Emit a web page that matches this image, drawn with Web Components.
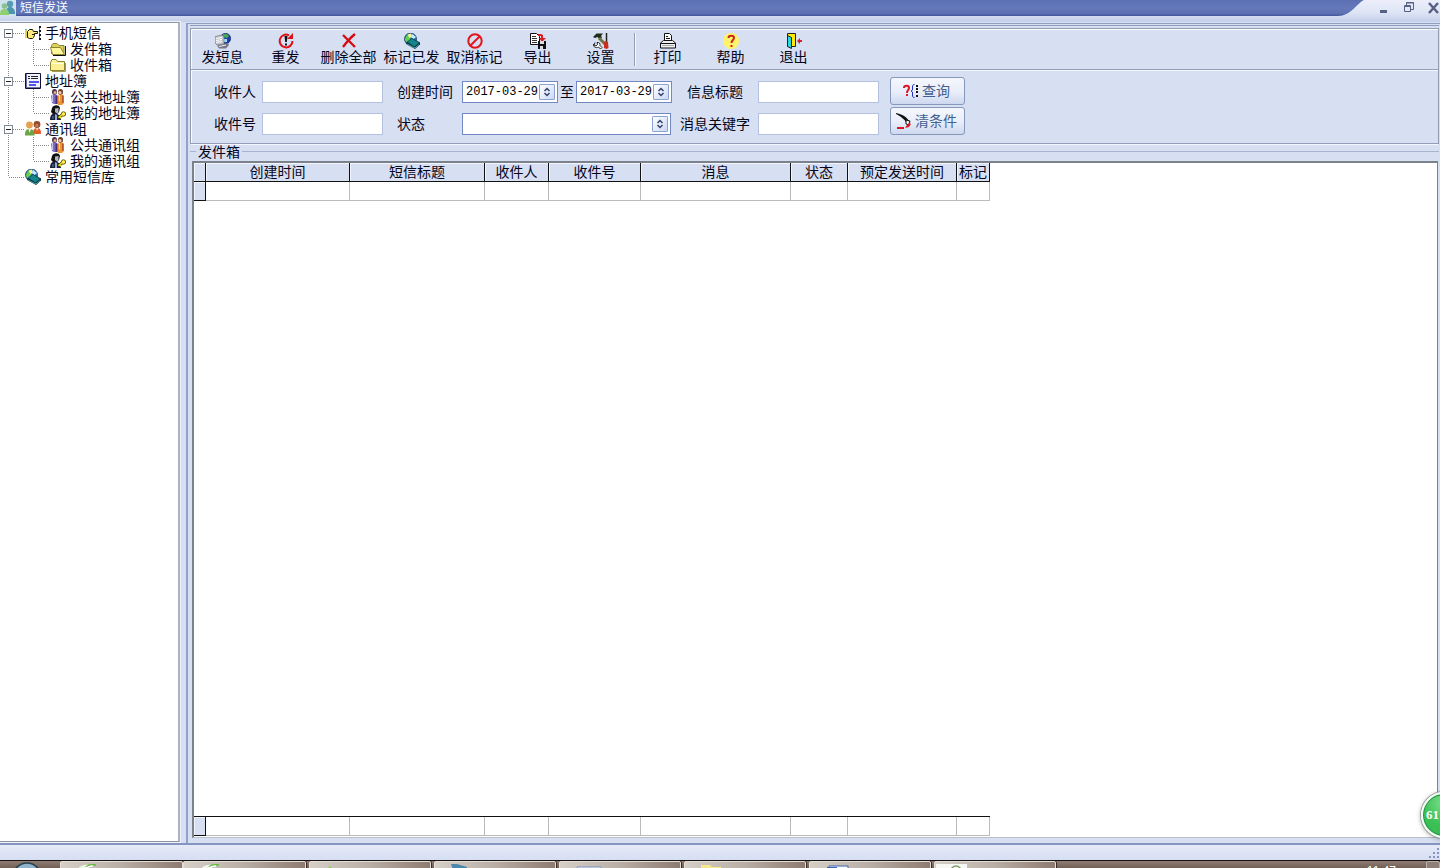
<!DOCTYPE html>
<html lang="zh-CN">
<head>
<meta charset="utf-8">
<title>短信发送</title>
<style>
html, body { height: 100%; margin: 0; }
body { overflow: hidden; font: 14px/16px "Liberation Sans", "Noto Sans CJK SC", sans-serif; color: #05051a; background: #d7dff3; }
</style>
</head>
<body>
<sms-app></sms-app>
<script>
const ICONS = {
  people: '<path d="M0 0h16v16H0z" fill="#cfe3ee"/><circle cx="10" cy="4" r="3.2" fill="#5b9ab5"/><path d="M6 14c0-5 1-7 4-7s5 2 5 7z" fill="#4d93b2"/><circle cx="4.500" cy="6" r="2.800" fill="#8cc08c"/><path d="M0 15c0-4 1-6 4.500-6S9 11 9 15z" fill="#8fcf6f"/>',
  hand: '<path d="M0 5h2v8H0z" fill="#e8d24a"/><path d="M0 4.500h2" stroke="#3fc6c6"/><path d="M2.500 12.500v-6l2-2h3l1 2h4v2H9.500v2l-1 2-1 1h-3z" fill="#ffe97a" stroke="#1a1405"/><path d="M7 9.500h2" stroke="#1a1405"/><path d="M14 1h2v2h-2zM14 5h2v2h-2zM14 9h2v2h-2zM14 13h2v2h-2z" fill="#15151f"/><path d="M14 3h1v2h-1zM14 7h1v2h-1zM14 11h1v2h-1z" fill="#e03030"/>',
  folderOpen: '<path d="M1.500 12.500V4.500l1.500-2h4l2 2h5v8z" fill="#dccf5c" stroke="#8b8430"/><path d="M2.500 13.500 .5 6.500h10l4 7z" fill="#fff79c" stroke="#8b8430"/><path d="M15.500 5v9.500H3" stroke="#111" fill="none"/>',
  folder: '<path d="M.5 13.500V5.500l1.500-3h4l1.500 2h7v9z" fill="#fbf093" stroke="#8b8430"/><path d="M1.500 6.500h12" stroke="#fffde0"/><path d="M15.500 6v8.500H2" stroke="#a39b55" fill="none"/>',
  book: '<path d="M.5 .5h15v15H.5z" fill="#f2f2fb" stroke="#10103c"/><path d="M1.500 1v14M1 14.500h14" stroke="#6c6ca0"/><path d="M3 3.500h2M6 3.500h7M3 5.500h2M6 5.500h7" stroke="#222"/><path d="M4 9h10M4 12h7" stroke="#2222e8" stroke-width="1.500"/>',
  pair: '<ellipse cx="4.500" cy="3" rx="2.500" ry="3" fill="#4a3350"/><circle cx="5" cy="3.500" r="1.500" fill="#e3ac8a"/><path d="M1 7c1-2 6-2 6.500 0v8H5.500L4 15l-2-1z" fill="#7a6cc4"/><path d="M5.500 6.500h2V15h-2z" fill="#40307a"/><path d="M2.500 6v7" stroke="#c9c3ee"/><ellipse cx="10.500" cy="3" rx="2.500" ry="3" fill="#6b3a2a"/><circle cx="10" cy="3.500" r="1.600" fill="#f4cba4"/><path d="M8 7c1-2 5-2 6 0v7l-2 2H8z" fill="#ee9432"/><path d="M12 6.500h1.500V14H12z" fill="#b0542a"/><path d="M9.500 6v6" stroke="#ffd79a"/>',
  userKey: '<path d="M2 3C3 0 9-1 10 3l-1 4-2 2H3L1 7z" fill="#101010"/><path d="M5 3.500 8.500 3v4L7 8.500 5 7z" fill="#b4b8bc"/><path d="M0 15c0-5 2-6.500 5-6.500S11 11 11 15z" fill="#1b2038"/><path d="m5 9 2 1v5H5z" fill="#8fb0dd"/><path d="M3 11v3" stroke="#5d7cc0"/><path d="m8 13 4-3" stroke="#4a4400" stroke-width="3"/><circle cx="13.500" cy="9" r="2.200" fill="#fff14e" stroke="#6b6000"/><path d="m8.500 12.700 4-3M10 12l1.500 1.500" stroke="#e9db20" stroke-width="1.500"/>',
  group: '<circle cx="4.500" cy="4" r="3.400" fill="#e5a050"/><circle cx="12" cy="3.500" r="3.400" fill="#96482a"/><circle cx="11.800" cy="4.500" r="1.800" fill="#c47a50"/><path d="M8 13c0-4 1-6 4-6s4 2 4 6z" fill="#e0602c"/><path d="M0 14.500C0 10 1 8 4.500 8S9.500 10 9.500 14.500z" fill="#6aa548"/><path d="m3.500 8 1 4 1.500-4z" fill="#eef7e5"/><path d="m11 7 1 3 1.500-3z" fill="#fbdcc8"/>',
  globe: '<circle cx="6.500" cy="6" r="6" fill="#2e72b8" stroke="#173d66" stroke-width=".8"/><path d="M.8 6 3 2l4 1-1.500 4L2 9z" fill="#63cf4a"/><path d="M3.500 1.500 7 .6 8 3.500 5.500 5z" fill="#f4f78a"/><path d="M8 .8 12 4 9 6.500 7 4z" fill="#bfeaff"/><path d="m3 9 5-4 8 4.500v2L11 16l-9-5z" fill="#062f3a"/><path d="m3.500 9 4.500-3.200 7 4L10.500 13.500z" fill="#15858c"/><path d="m3 11 8 4 4-3.500" stroke="#5dc0c4" fill="none" stroke-width=".8"/>',
  send: '<circle cx="10.500" cy="5.500" r="5.200" fill="#1d3fb0" stroke="#101c50" stroke-width=".6"/><path d="M8 1h4l2 2-2 2-4-1z" fill="#46a850"/><path d="M9 6h3v3H9z" fill="#9fdcff"/><path d="m0 3.500 7-1.500 2 2v7l-7 1-2-2z" fill="#c2c2c8" stroke="#777" stroke-width=".7"/><path d="M1 5.500 7 4.500M1 7.500l6-1M1 9.500l6-1" stroke="#fff"/><path d="m2 12.500 11-2.500 1 2-3 3.500H4z" fill="#77778a"/><path d="m4 13.500 7-1.500" stroke="#eee"/>',
  resend: '<path d="M11 2.300A6.400 6.400 0 1 0 14.500 8" fill="none" stroke="#df1118" stroke-width="2"/><path d="M15 0v6H9z" fill="#df1118"/><path d="M6.500 3h3L8.800 9H7.200zM7 10.500h2v2H7z" fill="#111"/>',
  del: '<path d="m2 2 12 12M14 1C9 5 5 10 2 14" stroke="#d60c12" stroke-width="2.300" fill="none"/>',
  forbid: '<circle cx="8" cy="8" r="6.700" fill="none" stroke="#e2151b" stroke-width="2"/><path d="M12.500 3.500 3.500 12.500" stroke="#e2151b" stroke-width="2"/>',
  export: '<path d="M.5.5h6l3 3V11.500h-9z" fill="#fff" stroke="#111"/><path d="M2 3.500h4M2 5.500h5M2 7.500h5M2 9.500h5" stroke="#333"/><path d="M8 1h3l2 1v3h3l-4 4-3-4h2V3H8z" fill="#dc1a22"/><path d="M8 8h8v8H8z" fill="#111"/><path d="M10 8h4v3h-4zM10 13h3v3h-3z" fill="#ddd"/>',
  tools: '<path d="M0 4 3.500.5H10L8 3l1 1.500L7 6.500 4.500 4 2 5z" fill="#222b1a"/><path d="m6 5 8 8" stroke="#6e7440" stroke-width="3"/><path d="M13.500 0v9" stroke="#222" stroke-width="1.500"/><path d="M11 9l2-1 2 1 .5 6-2 1-2.500-1z" fill="#c92d1e"/><path d="M2 9.500 1 12l2 1 1.500-1.500L4 9.500c2-.5 3.500 1 3 3L9 14.500 7.500 16 5.500 14C3 15.500 0 14 .500 11" fill="#fff" stroke="#222"/>',
  print: '<path d="M4.500 8V.5h5l2 2V8" fill="#fff" stroke="#111"/><path d="M6 3.500h2M6 5.500h4" stroke="#111"/><path d="M3.500 7.500.5 10v5h15v-5l-3-2.500z" fill="#f2f2f2" stroke="#111"/><path d="M1 10.500h14" stroke="#111"/><path d="M2 12.500h12" stroke="#aaa"/>',
  help: '<circle cx="8" cy="8" r="8" fill="#fff36b"/><path d="M5.500 5c0-3 5.500-3 5.500 0 0 2-2.500 2-2.500 5" stroke="#cf251b" stroke-width="2" fill="none"/><path d="M7.500 12h2v2h-2z" fill="#cf251b"/>',
  exit: '<path d="M1.500 .5h8v13h-8z" fill="#ffe900" stroke="#222"/><path d="m1.500 2.500 4 2v11l-4-2z" fill="#2cd7e5" stroke="#222"/><path d="M11 8l3-3v2h2v2h-2v2z" fill="#d91e2b"/>',
  query: '<path d="M1 5c0-3 5-3 5 0 0 2-2 2-2 5M4 11v2" stroke="#dc1622" stroke-width="2" fill="none"/><path d="M11.500 1.500h-1L9.500 3v4L8 8l1.500 1v4l1 1.500h1" stroke="#2530c5" fill="none"/><path d="M13 2h2v2h-2zM13 5h2v2h-2zM13 8h2v2h-2zM13 12h2v2h-2z" fill="#111"/>',
  sweep: '<path d="M0 0c5 1 10 3 13 8l-2 3C9 6 4 3 0 1z" fill="#111"/><path d="m10 7 4 1-1 4-3-1z" fill="#eee" stroke="#111"/><path d="m13 10 2 1-2 3-4 1 2-3zM1 14h7v2H1z" fill="#d71824"/>'
};

const define = (name, html, setup) => {
  const template = document.createElement('template');
  template.innerHTML = html;
  customElements.define(name, class extends HTMLElement {
    constructor() {
      super();
      this.attachShadow({ mode: 'open' }).append(template.content.cloneNode(true));
    }
    connectedCallback() { if (setup) setup(this, this.shadowRoot); }
  });
};

const placeIcon = (el, root) => {
  const icon = document.createElement('ui-icon');
  icon.setAttribute('name', el.getAttribute('icon'));
  root.querySelector('.icon').append(icon);
};

define('ui-icon', `<style>:host{display:block;width:16px;height:16px;flex:none}svg{display:block;width:100%;height:100%}</style>
<svg viewBox="0 0 16 16" aria-hidden="true"></svg>`,
  (el, root) => { root.querySelector('svg').innerHTML = ICONS[el.getAttribute('name')] || ''; });

define('title-bar', `<style>
:host{display:flex;align-items:flex-start;height:22px;background:linear-gradient(#eceefa,#dfe5f5 55%,#c3cfe9)}
.tab{flex:1;display:flex;align-items:center;gap:4px;height:16px;background:linear-gradient(#5b6fb3,#6478ba 50%,#5d70b1 85%,#42549a);color:#fff;font-size:12px;line-height:14px}
h1{font:inherit;margin:0}
.curve{display:block;width:30px;height:16px}
nav{display:flex;gap:13px;padding:0 1px 0 13px}
button{border:0;background:none;padding:0;width:12px;height:16px;display:block}
button svg{display:block}
</style>
<div class="tab"><ui-icon name="people"></ui-icon><h1>短信发送</h1></div>
<svg class="curve" viewBox="0 0 30 16" aria-hidden="true"><defs><linearGradient id="g" x2="0" y2="1"><stop stop-color="#5b6fb3"/><stop offset=".5" stop-color="#6478ba"/><stop offset=".85" stop-color="#5d70b1"/><stop offset="1" stop-color="#42549a"/></linearGradient></defs><path d="M0 0h30C22 4 17 16 4 16H0z" fill="url(#g)"/></svg>
<nav>
<button aria-label="最小化"><svg width="12" height="16"><path d="M3 10h7v3H3z" fill="#566184"/></svg></button>
<button aria-label="还原"><svg width="12" height="16" fill="none" stroke="#566184"><path d="M4.500 5V2.500h7v7H9"/><path d="M4 3h8"/><path d="M2.500 5.500h6v6h-6zM2 6.500h7"/></svg></button>
<button aria-label="关闭"><svg width="12" height="16"><path d="m2 3 9 10M11 3 2 13" stroke="#566184" stroke-width="2.500"/></svg></button>
</nav>`);

define('tree-item', `<style>
:host{display:flex;align-items:center;height:16px;--v:repeating-linear-gradient(#8a8a8a 0 1px,transparent 1px 2px);--h:repeating-linear-gradient(90deg,#8a8a8a 0 1px,transparent 1px 2px)}
.g{width:25px;height:16px;flex:none;display:flex;align-items:center;background-repeat:no-repeat}
.root{background-image:var(--v);background-size:1px 16px;background-position:8px 0}
:host([level="1"]) .root{background-image:var(--v),var(--h);background-size:1px 16px,16px 1px;background-position:8px 0,9px 8px}
:host([first]) .root{background-size:1px 8px,16px 1px;background-position:8px 8px,9px 8px}
:host([last]) .root{background-size:1px 8px,16px 1px}
.sub{background-image:var(--v),var(--h);background-size:1px 16px,16px 1px;background-position:8px 0,9px 8px}
:host([end]) .sub{background-size:1px 8px,16px 1px}
:host([level="1"]) .sub{display:none}
button{display:none;width:9px;height:9px;margin:0 0 0 4px;padding:0;border:1px solid #7f8694;background:linear-gradient(#222,#222) center/5px 1px no-repeat #fff}
:host([open]) button{display:block}
.text{margin-left:4px;white-space:nowrap}
</style><div class="g root"><button aria-label="折叠"></button></div><div class="g sub"></div><span class="icon"></span><span class="text"><slot></slot></span>`, placeIcon);

define('tree-view', `<style>
:host{display:block;width:178px;flex:none;margin-bottom:1px;background:#fff;border:solid #8d96a5;border-width:1px 2px 1px 0;border-right-color:#aab3c2;outline:1px solid #eef1fa;padding-top:2px}
</style>
<tree-item level="1" first open icon="hand">手机短信</tree-item>
<tree-item icon="folderOpen">发件箱</tree-item>
<tree-item end icon="folder">收件箱</tree-item>
<tree-item level="1" open icon="book">地址簿</tree-item>
<tree-item icon="pair">公共地址簿</tree-item>
<tree-item end icon="userKey">我的地址簿</tree-item>
<tree-item level="1" open icon="group">通讯组</tree-item>
<tree-item icon="pair">公共通讯组</tree-item>
<tree-item end icon="userKey">我的通讯组</tree-item>
<tree-item level="1" last icon="globe">常用短信库</tree-item>`);

define('tool-button', `<style>
:host{display:block;width:63px}
button{display:flex;flex-direction:column;align-items:center;width:100%;border:0;padding:0;background:none;font:inherit;color:inherit;white-space:nowrap}
</style><button><span class="icon"></span><span><slot></slot></span></button>`, placeIcon);

define('tool-bar', `<style>
:host{display:flex;align-items:flex-start;height:34px;padding:4px 0 2px;border-bottom:1px solid #939fb8;box-shadow:0 1px #f4f7ff}
hr{width:1px;height:33px;margin:0 0 0 2px;border:0;border-right:1px solid #f5f7fd;background:#939fae}
</style>
<tool-button icon="send">发短息</tool-button><tool-button icon="resend">重发</tool-button><tool-button icon="del">删除全部</tool-button><tool-button icon="globe">标记已发</tool-button><tool-button icon="forbid">取消标记</tool-button><tool-button icon="export">导出</tool-button><tool-button icon="tools">设置</tool-button><hr><tool-button icon="print">打印</tool-button><tool-button icon="help">帮助</tool-button><tool-button icon="exit">退出</tool-button>`);

const SPIN = '<svg width="8" height="10" aria-hidden="true"><path d="M1.500 4 4 1.500 6.500 4M1.500 6 4 8.500 6.500 6" fill="none" stroke="#33436f" stroke-width="1.500"/></svg>';
define('filter-form', `<style>
:host{display:block;height:73px;border-bottom:1px solid #939fb8;box-shadow:0 1px #f4f7ff}
form{display:flex;padding:7px 0 0 23px;gap:11px}
.fields{display:grid;grid-template-columns:48px 121px 14px 65px 210px 86px 121px;grid-template-rows:22px 22px;row-gap:10px;padding-top:4px;align-items:center}
.mid{text-align:center}
input{box-sizing:border-box;width:100%;height:22px;border:1px solid #b4c1df;background:#fff;margin:0;padding:0 3px;font:inherit}
.range{display:flex;justify-content:space-between;align-items:center}
.combo{display:flex;align-items:center;box-sizing:border-box;width:96px;height:22px;border:1px solid #7289c2;background:#fff}
.combo input{flex:1;min-width:0;border:0;height:18px;padding:0 0 0 3px;font:12px/18px "Liberation Mono","Noto Sans CJK SC",monospace;color:#000}
.spin{display:grid;place-items:center;flex:none;box-sizing:border-box;width:16px;height:16px;margin-right:2px;padding:0;border:1px solid #8da2d4;border-radius:1px;background:linear-gradient(135deg,#fff,#cbd8f4)}
.wide{width:209px;position:relative}
select{appearance:none;width:100%;height:20px;border:0;background:none;font:inherit;padding:0 20px 0 4px}
.wide .spin{position:absolute;right:0;top:2px;pointer-events:none}
.actions{display:flex;flex-direction:column;gap:2px}
.actions button{display:flex;align-items:center;justify-content:center;gap:3px;box-sizing:border-box;width:75px;height:28px;padding:0 2px 0 0;border:1px solid #8797b8;border-radius:3px;background:linear-gradient(#f5f7fd,#e8edf9 55%,#cdd8ef);font:inherit;color:#416090;white-space:nowrap}
</style>
<form onsubmit="return false">
<div class="fields">
<label for="a">收件人</label><input id="a"><i></i><label for="b">创建时间</label>
<div class="range"><div class="combo"><input id="b" value="2017-03-29"><button type="button" class="spin" aria-label="选择开始日期">${SPIN}</button></div><label for="c">至</label><div class="combo"><input id="c" value="2017-03-29"><button type="button" class="spin" aria-label="选择结束日期">${SPIN}</button></div></div>
<label class="mid" for="d">信息标题</label><input id="d">
<label for="e">收件号</label><input id="e"><i></i><label for="f">状态</label>
<div class="combo wide"><select id="f"><option></option></select><span class="spin">${SPIN}</span></div>
<label class="mid" for="h">消息关键字</label><input id="h">
</div>
<div class="actions"><button type="submit"><ui-icon name="query"></ui-icon>查询</button><button type="reset"><ui-icon name="sweep"></ui-icon>清条件</button></div>
</form>`);

define('message-grid', `<style>
:host{flex:1;min-height:0;display:flex;flex-direction:column}
.caption{display:flex;align-items:center;gap:2px;height:15px;margin:0 0 2px;font:inherit}
.caption::before,.caption::after{content:"";height:1px;background:#a9b4cc}
.caption::before{width:6px}.caption::after{flex:1}
.view{flex:1;min-height:0;display:flex;flex-direction:column;justify-content:space-between;background:#fff;border:1px solid #7c828c;border-width:2px 1px 1px 2px;border-bottom-color:#b8c0ca;margin:0 1px 0 2px}
table{border-collapse:separate;border-spacing:0;table-layout:fixed;width:796px}
th,td{box-sizing:border-box;padding:0;height:19px;font-weight:400;line-height:16px;text-align:center;white-space:nowrap;overflow:hidden}
th{border-right:1px solid #111;border-bottom:1px solid #111;background:#d7dff3;box-shadow:inset 1px 1px #f2f5fd}
td{border-right:1px solid #bbb;border-bottom:1px solid #bbb}
.sum{margin-bottom:1px;border-top:1px solid #111}
</style>
<h2 class="caption">发件箱</h2>
<div class="view">
<table><colgroup></colgroup><thead><tr><th></th><th scope="col">创建时间</th><th scope="col">短信标题</th><th scope="col">收件人</th><th scope="col">收件号</th><th scope="col">消息</th><th scope="col">状态</th><th scope="col">预定发送时间</th><th scope="col">标记</th></tr></thead>
<tbody><tr><th></th><td></td><td></td><td></td><td></td><td></td><td></td><td></td><td></td></tr></tbody></table>
<table class="sum" aria-label="合计"><colgroup></colgroup><tbody><tr><th></th><td></td><td></td><td></td><td></td><td></td><td></td><td></td><td></td></tr></tbody></table>
</div>`, (el, root) => {
  const cols = [12, 144, 135, 64, 92, 150, 57, 109, 33].map(w => `<col style="width:${w}px">`).join('');
  root.querySelectorAll('colgroup').forEach(g => { g.innerHTML = cols; });
});

define('status-bar', `<style>
:host{display:flex;justify-content:flex-end;align-items:flex-end;height:15px;border-top:2px solid #8595bf;background:linear-gradient(#e6ebf8,#d6def3)}
svg{display:block}
</style><svg width="13" height="13" fill="#8795c0" aria-hidden="true"><path d="M10 1h2v2h-2zM6 5h2v2H6zM10 5h2v2h-2zM2 9h2v2H2zM6 9h2v2H6zM10 9h2v2h-2z"/></svg>`);

define('task-bar', `<style>
:host{display:flex;box-sizing:border-box;height:8px;overflow:hidden;border-top:1px solid #17110f;background:linear-gradient(#8f7c72,#725f56);color:#fff;font-size:12px;line-height:14px}
.start{width:60px;flex:none;display:flex;justify-content:center;padding-right:6px;box-sizing:border-box}
.start svg{flex:none}
.tasks{display:flex;gap:3px;flex:none}
button{display:flex;align-items:flex-start;width:122px;height:20px;box-sizing:border-box;border:1px solid #e4ded8;border-radius:2px;padding:0 0 0 16px;background:linear-gradient(90deg,#d5cfc8,#b9aea5 50%,#8d7b70);box-shadow:1px 0 #3a2d27}
button svg{display:block}
.pair{display:flex}
.pair button{width:123px}
.plain{padding-left:1px}
.tray{flex:1;display:flex;justify-content:flex-end;gap:30px}
time{padding-top:3px}
.desk{width:14px;height:20px;border:1px solid #bab0aa;background:#8f8079;padding:0}
</style>
<div class="start"><svg width="30" height="20" aria-hidden="true"><circle cx="15" cy="16" r="14" fill="#8fb4cc" stroke="#24414f" stroke-width="1.500"/></svg></div>
<div class="tasks"><div class="pair"></div></div>
<div class="tray"><time>11:47</time><button class="desk" aria-label="显示桌面"></button></div>`, (el, root) => {
  const leaf = '<path d="M0 8q4-6 12-5l-3 5H0z" fill="#f1f6ec"/><path d="M9 5q3-3 10-2" stroke="#5cbd36" stroke-width="1.500" fill="none"/><path d="M8 8q2-4 8-4" stroke="#fff" stroke-width="1.500" fill="none"/>';
  const art = [leaf, leaf, '<path d="m0 8 4-4 4 4z" fill="#8bd448"/>', '<path d="M0 2h6l10 3v3H2z" fill="#4d86ad"/>', '<path d="M1 8V5h24v3z" fill="#f4f7fb" stroke="#7b93c2"/>', '<path d="M0 3h9l2 2h9v3H0z" fill="#f7e88a"/>', '<path d="M3 8V4h19v4z" fill="#f6f8fc" stroke="#3e64ad"/><path d="M1 5h10v3H1z" fill="#3e64ad"/>', '<path d="M0 2h31v6H0z" fill="#f7f7f4"/><circle cx="20" cy="9" r="5" fill="none" stroke="#7d9c66" stroke-width="1.500"/>'];
  const tasks = root.querySelector('.tasks');
  art.forEach((a, i) => {
    const b = document.createElement('button');
    b.setAttribute('aria-label', '任务 ' + (i + 1));
    if (i === 7) b.className = 'plain';
    b.innerHTML = `<svg width="32" height="8" aria-hidden="true">${a}</svg>`;
    (i < 2 ? tasks.firstElementChild : tasks).append(b);
  });
});

define('float-ball', `<style>
:host{position:absolute;right:-27px;bottom:30px;width:46px;height:46px;box-sizing:border-box;border:2px solid #f4fbf4;border-radius:50%;background:radial-gradient(circle at 50% 20%,#79df8a,#3cc157 55%,#35b64e);box-shadow:0 0 0 1px #95a59b,0 1px 5px #0006,inset 0 0 0 1px #1f8f43;color:#fff;font:bold 13px/42px "Liberation Serif",serif;padding-left:3px}
</style><slot></slot>`);

define('sms-app', `<style>
:host{display:flex;flex-direction:column;height:100vh;position:relative;overflow:hidden}
main{flex:1;min-height:0;display:flex;gap:6px}
.pane{flex:1;min-width:0;display:flex;flex-direction:column;border-left:2px solid #8fa1cc;border-top:1px solid #8d9dbe;padding:0 1px 5px 2px;margin-top:1px}
.rule{height:1px;background:#8d9dbe;margin:1px 0 2px}
.box{border:1px solid #929daf;box-shadow:inset 1px 1px #fafcff;border-bottom:0}
</style>
<title-bar></title-bar>
<main><tree-view></tree-view><div class="pane"><div class="rule"></div><div class="box"><tool-bar></tool-bar><filter-form></filter-form></div><message-grid></message-grid></div></main>
<status-bar></status-bar><task-bar></task-bar><float-ball>61</float-ball>`);
</script>
</body>
</html>
